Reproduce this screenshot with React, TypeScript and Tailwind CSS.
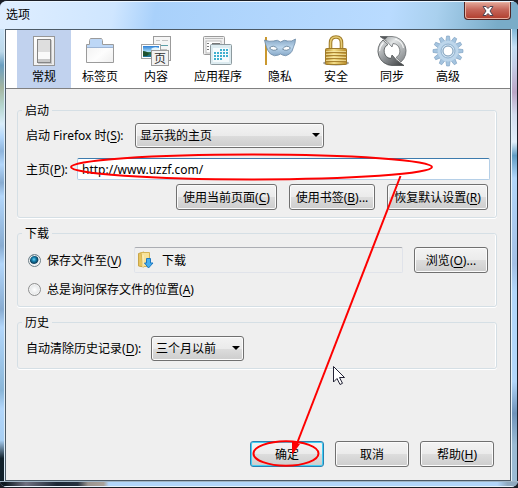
import React from 'react';

type TabItem = {
  id: string;
  label: string;
  icon: React.ReactNode;
};

const GeneralIcon = () => (
  <svg width="32" height="32" viewBox="0 0 32 32">
    <defs>
      <linearGradient id="plate" x1="0" y1="0" x2="1" y2="1">
        <stop offset="0" stopColor="#fff" />
        <stop offset="1" stopColor="#e9e9e9" />
      </linearGradient>
    </defs>
    <rect x="5.5" y="1.5" width="21" height="29" fill="url(#plate)" stroke="#979797" />
    <rect x="10" y="5" width="14" height="24" fill="#aaa" opacity=".6" />
    <rect x="9.5" y="4.5" width="13" height="23" fill="#dedede" stroke="#858585" />
    <rect x="10" y="17" width="12" height="7" fill="#fafafa" />
    <rect x="10" y="24" width="12" height="3" fill="#c8c8c8" />
  </svg>
);

const TabsIcon = () => (
  <svg width="32" height="32" viewBox="0 0 32 32">
    <defs>
      <linearGradient id="tabBody" x1="0" y1="0" x2="1" y2="1">
        <stop offset="0" stopColor="#eee" />
        <stop offset=".6" stopColor="#fdfdfd" />
        <stop offset="1" stopColor="#eee" />
      </linearGradient>
    </defs>
    <path d="M2.5 27.5V9.5h3v-4l1-2h11l1 2v4h11v18z" fill="url(#tabBody)" stroke="#9b9b9b" />
    <path d="M3 12v-2h3V5l1-1h10l1 1v5h11v2z" fill="#bdd7f6" />
    <path d="M3 12.5h26" stroke="#9db5d5" />
  </svg>
);

const ContentIcon = () => (
  <svg width="32" height="32" viewBox="0 0 32 32">
    <defs>
      <linearGradient id="photo" x1="0" y1="0" x2="0" y2="1">
        <stop offset="0" stopColor="#2b7ed6" />
        <stop offset=".5" stopColor="#a9dcf5" />
        <stop offset=".6" stopColor="#2d6a35" />
        <stop offset="1" stopColor="#1e78a8" />
      </linearGradient>
    </defs>
    <rect x="13.5" y="1.5" width="17" height="24" fill="#f5f5f5" stroke="#9b9b9b" />
    <path d="M16 5.5h4M22 5.5h6M17 14.5h10M20 18.5h8" stroke="#c2c2c2" />
    <path d="M20 10.5h8" stroke="#5d9fa8" />
    <rect x="1.5" y="9.5" width="19" height="14" fill="#fff" stroke="#a3a3a3" />
    <rect x="3" y="11" width="16" height="11" fill="url(#photo)" />
    <path d="M11 14q3-3 8-1v3q-5 2-8-2" fill="#e4f5fc" />
    <path d="M3 16q4 0 6 3l-2 2H3z" fill="#1d5230" />
    <rect x="11.5" y="15.5" width="17" height="15" fill="#f2f2f2" stroke="#9b9b9b" />
    <text x="20" y="28" textAnchor="middle" fontSize="12" fontFamily="'Noto Sans CJK SC', sans-serif" fill="#333">
      页
    </text>
  </svg>
);

const AppsIcon = () => (
  <svg width="32" height="32" viewBox="0 0 32 32">
    <rect x="1.5" y="1.5" width="21" height="18" rx="1" fill="#f0f0f0" stroke="#9b9b9b" />
    <path d="M3 3.5h18" stroke="#bbb" />
    <rect x="4" y="6" width="15" height="12" fill="#fff" stroke="#bbb" />
    <path d="M5 8.5h2M5 11.5h2M5 14.5h2M10 8.5h8" stroke="#777" />
    <rect x="8.5" y="9.5" width="21" height="20" rx="1" fill="#dcebf0" stroke="#8d9a9f" />
    <rect x="11" y="13" width="16" height="14" fill="#f5fbfd" />
    <g fill="#3eb0cf">
      {[14, 17, 20, 23].map((y, row) =>
        [12, 15, 18, 21, 24]
          .filter((_, col) => !(row === 0 && col < 2) && !(row === 3 && col > 2))
          .map((x) => <rect key={`${x}-${y}`} x={x} y={y} width="2" height="2" />)
      )}
    </g>
  </svg>
);

const PrivacyIcon = () => (
  <svg width="32" height="32" viewBox="0 0 32 32">
    <defs>
      <linearGradient id="mask" x1="0" y1="0" x2="0" y2="1">
        <stop offset="0" stopColor="#84a5c4" />
        <stop offset=".5" stopColor="#bcd6ec" />
        <stop offset="1" stopColor="#86a8c8" />
      </linearGradient>
    </defs>
    <path d="M2 2v28" stroke="#c58d18" strokeWidth="1.8" />
    <path
      d="M.5 5q5 2 9 1 4-2 7 1 4-3 7-1 4 1 8-2 0 4-2 8-1 5-4 7-4 3-7 1l-2-1-2 1q-4 2-8-1-3-3-4-7Q1 8 .5 5z"
      fill="url(#mask)"
      stroke="#6f8ba7"
      strokeWidth=".8"
    />
    <path d="M5.500 13q4-4 8 1-4 3-8-1zM18.500 14q4-5 8-1-4 4-8 1z" fill="#fff" stroke="#5c7891" strokeWidth=".8" />
  </svg>
);

const SecurityIcon = () => (
  <svg width="32" height="32" viewBox="0 0 32 32">
    <defs>
      <linearGradient id="brass" x1="0" y1="0" x2="1" y2="0">
        <stop offset="0" stopColor="#b78b2b" />
        <stop offset=".4" stopColor="#f4df89" />
        <stop offset="1" stopColor="#b88b28" />
      </linearGradient>
    </defs>
    <ellipse cx="16" cy="28" rx="13" ry="2.5" fill="#777" opacity=".7" />
    <path d="M10.5 14V8q0-6 5.500-6t5.500 6v6" fill="none" stroke="#a17d2a" strokeWidth="3.600" />
    <path d="M10.5 14V8q0-6 5.500-6t5.500 6v6" fill="none" stroke="#e6cc75" strokeWidth="1.500" />
    <rect x="5.5" y="13.5" width="21" height="16" rx="1" fill="url(#brass)" stroke="#9d7a2b" />
    <path d="M6 17.5h20M6 20.5h20M6 23.5h20M6 26.5h20" stroke="#aa8431" />
    <path d="M6 16.5h20M6 19.5h20M6 22.5h20M6 25.5h20" stroke="#f8eaa9" opacity=".7" />
  </svg>
);

const SyncIcon = () => (
  <svg width="32" height="32" viewBox="0 0 32 32">
    <defs>
      <linearGradient id="steelLight" x1="0" y1="0" x2="1" y2="1">
        <stop offset="0" stopColor="#8b8f91" />
        <stop offset=".35" stopColor="#e2e5e6" />
        <stop offset="1" stopColor="#7d8184" />
      </linearGradient>
      <linearGradient id="steelDark" x1="0" y1="0" x2="1" y2="1">
        <stop offset="0" stopColor="#eceeef" />
        <stop offset=".5" stopColor="#8d9194" />
        <stop offset="1" stopColor="#3a3c3e" />
      </linearGradient>
    </defs>
    {/* lower arrow, sweeping up along the left */}
    <path
      d="M28 30.5H16A14.500 14.500 0 0 1 7 5l5 4.500A7.500 7.500 0 0 0 15 23.500l1-3.500 5 5.500z"
      fill="url(#steelDark)"
      stroke="#4d5052"
      strokeWidth=".8"
    />
    {/* upper arrow, sweeping down along the right */}
    <path
      d="M4 1.500h12A14.500 14.500 0 0 1 25 27l-5-4.500A7.500 7.500 0 0 0 17 8.500L16 12l-5-5.500z"
      fill="url(#steelLight)"
      stroke="#696d70"
      strokeWidth=".8"
    />
    <path d="M4 1.500h8l-3 3z" fill="#55585a" />
    <path d="M3.500 16q.5-5 4-8.500M19 4q7 2 8.500 9" fill="none" stroke="#fff" strokeWidth="1.200" opacity=".8" />
  </svg>
);

const AdvancedIcon = () => (
  <svg width="32" height="32" viewBox="0 0 32 32">
    <g fill="#a5c4df" stroke="#7c9fc0" strokeWidth=".6">
      {[0, 30, 60, 90, 120, 150].map((angle) => (
        <path key={angle} d="M14.600 1h2.800l.8 5v20l-.8 5h-2.800l-.8-5V6z" transform={`rotate(${angle} 16 16)`} />
      ))}
    </g>
    <circle cx="16" cy="16" r="10.500" fill="#bdd6eb" />
    <circle cx="16" cy="16" r="7" fill="#d2e4f3" stroke="#8fb0cd" />
    <circle cx="16" cy="16" r="5" fill="#fff" stroke="#7899b6" />
  </svg>
);

const tabs: TabItem[] = [
  { id: 'general', label: '常规', icon: <GeneralIcon /> },
  { id: 'tabs', label: '标签页', icon: <TabsIcon /> },
  { id: 'content', label: '内容', icon: <ContentIcon /> },
  { id: 'apps', label: '应用程序', icon: <AppsIcon /> },
  { id: 'privacy', label: '隐私', icon: <PrivacyIcon /> },
  { id: 'security', label: '安全', icon: <SecurityIcon /> },
  { id: 'sync', label: '同步', icon: <SyncIcon /> },
  { id: 'advanced', label: '高级', icon: <AdvancedIcon /> },
];

const Key = ({ k }: { k: string }) => (
  <>
    (<u className="underline-offset-2">{k}</u>)
  </>
);

type ButtonProps = {
  children: React.ReactNode;
  className?: string;
  primary?: boolean;
};

const Button = ({ children, className = '', primary = false }: ButtonProps) => (
  <button
    type="button"
    className={`h-[26px] shrink-0 whitespace-nowrap rounded-[3px] border bg-[linear-gradient(#f3f3f3,#ebebeb_50%,#dddddd_50%,#cdcdcd)] text-center ${
      primary
        ? 'border-[#2c7fb0] shadow-[inset_0_0_0_1px_#3fd0f5]'
        : 'border-[#707070] shadow-[inset_0_0_0_1px_#fbfbfb]'
    } ${className}`}
  >
    {children}
  </button>
);

type SelectProps = {
  id: string;
  options: string[];
  className: string;
};

const Select = ({ id, options, className }: SelectProps) => (
  <div className={`relative h-[25px] ${className}`}>
    <select
      id={id}
      className="h-full w-full appearance-none rounded-[3px] border border-[#707070] bg-[linear-gradient(#f3f3f3,#ebebeb_50%,#dddddd_50%,#cdcdcd)] pl-1 shadow-[inset_0_0_0_1px_#fbfbfb]"
    >
      {options.map((option) => (
        <option key={option}>{option}</option>
      ))}
    </select>
    <svg className="pointer-events-none absolute top-[10px] right-[4px]" width="8" height="4" viewBox="0 0 8 4">
      <path d="M0 0h8L4 4z" fill="#000" />
    </svg>
  </div>
);

type GroupProps = {
  title: string;
  className?: string;
  children: React.ReactNode;
};

const Group = ({ title, className = '', children }: GroupProps) => (
  <fieldset
    className={`min-w-0 rounded-[3px] border border-[#d5dfe5] px-2 shadow-[inset_-1px_0_0_#fff,0_1px_0_#fff] ${className}`}
  >
    <legend className="-ml-1 px-[3px] leading-[17px]">{title}</legend>
    {children}
  </fieldset>
);

const radioClass =
  "size-[13px] shrink-0 appearance-none rounded-full border border-[#8e8f8f] bg-radial from-[#fff] to-[#d4d8da] shadow-[inset_0_0_0_1px_#f4f4f4] checked:border-[#6d7f88] checked:bg-[radial-gradient(circle_at_45%_40%,#6fd3f5_0,#1580ad_2px,#0b3f5c_4px,#e8eef1_5px)]";

export default function App() {
  const [active, setActive] = React.useState('general');

  return (
    <div className="relative min-h-screen bg-[#1b1e26] font-['Noto_Sans','Noto_Sans_CJK_SC',sans-serif] text-[12px] leading-[17px] text-black">
      <div className="flex min-h-screen flex-col overflow-hidden rounded-[7px] border-y border-[#1b1e26] bg-[#b5d9fa]">
        {/* Title bar */}
        <header className="flex h-7 shrink-0 items-start justify-between border-t border-[#eaf5ff] bg-[linear-gradient(100deg,#dfeeff_0,#cfe6ff_22%,#a9d1fb_30%,#b9dbff_75%,#a9d0ee_84%,#79acc8_96%)] pr-[7px] pl-[6px]">
          <h1 className="pt-[4px]">选项</h1>
          <button
            type="button"
            aria-label="关闭"
            className="flex h-[18px] w-[47px] items-center justify-center rounded-b-[4px] border border-t-0 border-[#4f2525] bg-linear-to-b from-[#e3a99b] via-[#c5665a] via-45% to-[#b03c2c] shadow-[inset_0_0_0_1px_#e9b1a2]"
          >
            <svg width="12" height="10" viewBox="0 0 12 10">
              <path d="M1 .5h3l2 2 2-2h3L8 5l3 4.500H8l-2-2-2 2H1L4 5z" fill="#fff" stroke="#4d4654" />
            </svg>
          </button>
        </header>

        <div className="flex flex-1">
          {/* Glass edge, left */}
          <div className="w-[5px] shrink-0 border-r border-[#dcecf8] bg-[linear-gradient(#c9e2f7_0,#bdd9ea_5%,#6b9fc1_8%,#a4b5a0_13%,#b5d6cf_17%,#d9edfa_21%,#b2d6fa_24%,#8fb5dc_27%,#b2d6fa_30%,#88acd1_34%,#b2d6fa_37%,#88acd1_48%,#b2d6fa_52%,#88acd1_62%,#b2d6fa_66%,#8ab6d8_80%,#b2d6fa_84%,#a8cff3_91%,#11212b_95%)]" />

          <main className="flex min-w-0 flex-1 flex-col border border-[#4c5a66] bg-[#efefef]">
            <nav className="flex shrink-0 gap-[2px] border-b border-[#808080] bg-white pl-[11px]">
              {tabs.map((tab) => (
                <button
                  key={tab.id}
                  type="button"
                  onClick={() => setActive(tab.id)}
                  className={`flex h-[58px] min-w-[54px] flex-col items-center px-[9px] pt-[5px] whitespace-nowrap ${
                    active === tab.id ? 'bg-[#c1d2ee]' : ''
                  }`}
                >
                  {tab.icon}
                  <span className="leading-[20px]">{tab.label}</span>
                </button>
              ))}
            </nav>

            <form className="flex flex-1 flex-col gap-[7px] pt-[13px] pr-[13px] pb-[13px] pl-[11px]">
              <Group title="启动" className="pb-[7px]">
                <div className="flex items-center pt-1">
                  <label htmlFor="startup" className="w-[109px] whitespace-nowrap">
                    启动 Firefox 时<Key k="S" />:
                  </label>
                  <Select id="startup" className="w-[189px]" options={['显示我的主页', '显示空白页']} />
                </div>
                <div className="mt-[10px] flex items-center">
                  <label htmlFor="homepage" className="w-[51px] shrink-0">
                    主页<Key k="P" />:
                  </label>
                  <input
                    id="homepage"
                    type="text"
                    defaultValue="http://www.uzzf.com/"
                    className="mr-[-2px] h-[22px] min-w-0 flex-1 rounded-[2px] border border-[#b5cfe7] border-t-[#3d7bad] bg-white pl-1"
                  />
                </div>
                <div className="mt-1 flex justify-end gap-3">
                  <Button className="w-[101px]">
                    使用当前页面
                    <Key k="C" />
                  </Button>
                  <Button className="w-[86px]">
                    使用书签
                    <Key k="B" />
                    ...
                  </Button>
                  <Button className="w-[101px]">
                    恢复默认设置
                    <Key k="R" />
                  </Button>
                </div>
              </Group>

              <Group title="下载" className="pb-2">
                <div className="flex items-center pt-[5px]">
                  <label className="flex w-[108px] items-center gap-[6px] pl-[2px]">
                    <input type="radio" name="download" defaultChecked className={radioClass} />
                    <span>
                      保存文件至
                      <Key k="V" />
                    </span>
                  </label>
                  <div className="flex h-[26px] min-w-0 flex-1 items-center gap-2 rounded-[2px] border border-[#e0e3ea] border-t-[#abadb3] pl-[3px]">
                    <svg width="16" height="18" viewBox="0 0 16 18">
                      <path d="M.5 2.500L6 1v15l-5.500-1z" fill="#e7c45f" stroke="#c9a548" />
                      <path d="M3 1.500h8.500v14H5z" fill="#f7e29a" stroke="#d4b457" />
                      <path d="M5 4v12" stroke="#fff4c9" />
                      <path d="M8.500 7.500h4V12H15l-4.500 5L6.500 12h2z" fill="#45aef0" stroke="#1e78c0" />
                    </svg>
                    <span>下载</span>
                  </div>
                  <Button className="ml-[11px] w-[74px]">
                    浏览
                    <Key k="O" />
                    ...
                  </Button>
                </div>
                <label className="mt-2 flex items-center gap-[6px] pl-[2px]">
                  <input type="radio" name="download" className={radioClass} />
                  <span>
                    总是询问保存文件的位置
                    <Key k="A" />
                  </span>
                </label>
              </Group>

              <Group title="历史" className="pb-[7px]">
                <div className="flex items-center pt-[5px]">
                  <label htmlFor="history" className="w-[125px] whitespace-nowrap">
                    自动清除历史记录
                    <Key k="D" />:
                  </label>
                  <Select id="history" className="w-[93px]" options={['三个月以前', '一个月以前']} />
                </div>
              </Group>

              <div className="mt-auto flex justify-end gap-[11px] pr-[3px]">
                <Button primary className="w-[74px]">
                  确定
                </Button>
                <Button className="w-[74px]">取消</Button>
                <Button className="w-[74px]">
                  帮助
                  <Key k="H" />
                </Button>
              </div>
            </form>
          </main>

          {/* Glass edge, right */}
          <div className="w-[7px] shrink-0 border-r border-l border-r-[#1b1e26] border-l-[#e8f3fb] bg-[linear-gradient(#7fb6d6_0,#c7e0f5_4%,#c5cfe8_8%,#bba6c6_14%,#d4dcee_19%,#e1effb_25%,#5f9cc4_28%,#b2d6fa_33%,#a3bfe4_52%,#b2d6fa_58%,#b2d6fa_78%,#6f93ba_85%,#9bbbd4_92%)]" />
        </div>

        <div className="h-[6px] shrink-0 border-y border-t-[#9fb4c4] border-b-[#e8f3fb] bg-[linear-gradient(90deg,#0e1a22_0,#0e1a22_1%,#6f7080_5%,#1c2836_11%,#26313f_15%,#9a948f_17%,#a8a19a_20%,#b2d6fa_21%,#b2d6fa_96%,#8fa9bf_98%)]" />
      </div>

      {/* Walkthrough marks and pointer */}
      <svg className="pointer-events-none absolute top-0 left-0" width="518" height="488" viewBox="0 0 518 488">
        <g fill="none" stroke="#fe0000" strokeWidth="2">
          <ellipse cx="251.5" cy="167" rx="180.5" ry="12.500" />
          <ellipse cx="286" cy="453.5" rx="32.500" ry="12.200" />
          <path d="M400.5 176L296 446" />
        </g>
        <path d="M292 455l0-14 8 3z" fill="#fe0000" />
        <path d="M333.5 366.5v15.500l3.500-3.500 3 6 2.500-1.200-3-5.800h5z" fill="#fff" stroke="#222235" />
      </svg>
    </div>
  );
}
